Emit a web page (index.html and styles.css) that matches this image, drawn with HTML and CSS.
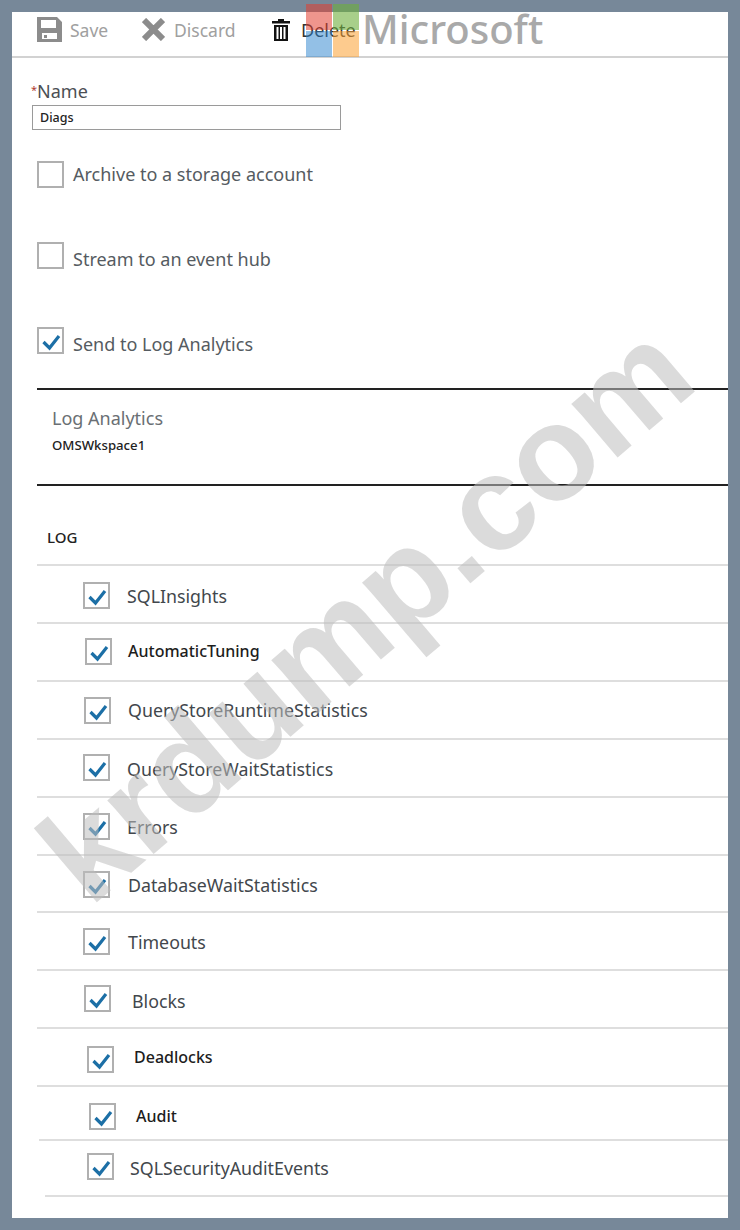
FILE: index.html
```html
<!DOCTYPE html>
<html lang="en">
<head>
    <meta charset="UTF-8">
    <meta name="viewport" content="width=device-width, initial-scale=1.0">
    <title>Diagnostics settings</title>
    <link rel="stylesheet" href="styles.css">
</head>
<body>
    <div class="panel">
        <header class="toolbar">
            <span class="tool tool-save">
                <svg width="25" height="25" viewBox="0 0 25 25"><path fill="#8c8c8c" fill-rule="evenodd" d="M0 0H20L25 5V25H0ZM4 3V11H19V3ZM5 16V22H20V16Z"/><rect x="7" y="18" width="3" height="3" fill="#8c8c8c"/></svg>
                Save
            </span>
            <span class="tool tool-discard">
                <svg width="23" height="23" viewBox="0 0 23 23"><path fill="none" stroke="#8c8c8c" stroke-width="6" d="M2 2L21 21M21 2L2 21"/></svg>
                Discard
            </span>
            <span class="tool tool-delete">
                <svg width="18" height="22" viewBox="0 0 18 22"><path fill="#111" fill-rule="evenodd" d="M6 0H12V2H18V4.500H0V2H6ZM2 6H16V22H2ZM4.500 8V20H6.500V8ZM8 8V20H10V8ZM11.500 8V20H13.500V8Z"/></svg>
                Delete
            </span>
        </header>

        <section class="name-field">
            <label class="field-label"><span class="required">*</span>Name</label>
            <div class="text-input">Diags</div>
        </section>

        <section class="targets">
            <div class="target target-archive"><span class="box"></span>Archive to a storage account</div>
            <div class="target target-stream"><span class="box"></span>Stream to an event hub</div>
            <div class="target target-send">
                <span class="box"><svg width="25" height="25" viewBox="0 0 25 25"><path class="tick" d="M4.500 13L10.500 19L20 7"/></svg></span>
                Send to Log Analytics
            </div>
        </section>

        <section class="workspace">
            <div class="workspace-title">Log Analytics</div>
            <div class="workspace-name">OMSWkspace1</div>
        </section>

        <div class="log-heading">LOG</div>

        <div class="log-list">
            <div class="row row-insights"><span class="box"><svg width="25" height="25" viewBox="0 0 25 25"><path class="tick" d="M4.500 13L10.500 19L20 7"/></svg></span>SQLInsights</div>
            <div class="row row-tuning dark"><span class="box"><svg width="25" height="25" viewBox="0 0 25 25"><path class="tick" d="M4.500 13L10.500 19L20 7"/></svg></span>AutomaticTuning</div>
            <div class="row row-runtime"><span class="box"><svg width="25" height="25" viewBox="0 0 25 25"><path class="tick" d="M4.500 13L10.500 19L20 7"/></svg></span>QueryStoreRuntimeStatistics</div>
            <div class="row row-wait"><span class="box"><svg width="25" height="25" viewBox="0 0 25 25"><path class="tick" d="M4.500 13L10.500 19L20 7"/></svg></span>QueryStoreWaitStatistics</div>
            <div class="row row-errors"><span class="box"><svg width="25" height="25" viewBox="0 0 25 25"><path class="tick" d="M4.500 13L10.500 19L20 7"/></svg></span>Errors</div>
            <div class="row row-dbwait"><span class="box"><svg width="25" height="25" viewBox="0 0 25 25"><path class="tick" d="M4.500 13L10.500 19L20 7"/></svg></span>DatabaseWaitStatistics</div>
            <div class="row row-timeouts"><span class="box"><svg width="25" height="25" viewBox="0 0 25 25"><path class="tick" d="M4.500 13L10.500 19L20 7"/></svg></span>Timeouts</div>
            <div class="row row-blocks"><span class="box"><svg width="25" height="25" viewBox="0 0 25 25"><path class="tick" d="M4.500 13L10.500 19L20 7"/></svg></span>Blocks</div>
            <div class="row row-deadlocks dark"><span class="box"><svg width="25" height="25" viewBox="0 0 25 25"><path class="tick" d="M4.500 13L10.500 19L20 7"/></svg></span>Deadlocks</div>
            <div class="row row-audit dark"><span class="box"><svg width="25" height="25" viewBox="0 0 25 25"><path class="tick" d="M4.500 13L10.500 19L20 7"/></svg></span>Audit</div>
            <div class="row row-security"><span class="box"><svg width="25" height="25" viewBox="0 0 25 25"><path class="tick" d="M4.500 13L10.500 19L20 7"/></svg></span>SQLSecurityAuditEvents</div>
        </div>

        <!-- overlays -->
        <div class="ms-logo">
            <div class="ms-squares">
                <span class="sq sq-red"></span>
                <span class="sq sq-green"></span>
                <span class="sq sq-blue"></span>
                <span class="sq sq-orange"></span>
            </div>
            <span class="ms-word">Microsoft</span>
        </div>
        <div class="watermark">krdump.com</div>
    </div>
</body>
</html>
```
FILE: styles.css
```css
:root {
    --frame-color: #778899;
    --text-color: #555b61;
    --dark-text: #1d1d1d;
    --line-color: #d2d2d2;
    --box-border: #b0b0b0;
}
html, body {
    margin: 0;
    padding: 0;
}
body {
    width: 740px;
    height: 1230px;
    overflow: hidden;
    background-color: var(--frame-color);
    font-family: "Noto Sans", "Open Sans", sans-serif;
    color: var(--text-color);
}
.panel {
    position: relative;
    box-sizing: border-box;
    width: 716px;
    height: 1206px;
    margin: 12px;
    background-color: #fff;
}

/* toolbar */
.toolbar {
    box-sizing: border-box;
    display: flex;
    align-items: center;
    height: 46px;
    padding: 0 0 9px 25px;
    border-bottom: 2px solid var(--line-color);
    font-size: 17.500px;
    color: #a0a0a0;
}
.tool {
    display: flex;
    align-items: center;
    gap: 8px;
}
.tool-save {
    width: 105px;
}
.tool-discard {
    width: 130px;
    gap: 9px;
}
.tool-delete {
    gap: 11px;
    font-size: 18px;
    color: #333;
}

/* name */
.name-field {
    padding: 20px 0 0 19px;
}
.field-label {
    display: block;
    font-size: 18px;
    line-height: 24px;
    color: #4b4f54;
}
.required {
    color: #b03a2e;
    font-size: 11px;
    vertical-align: 4px;
}
.text-input {
    box-sizing: border-box;
    width: 309px;
    height: 25px;
    margin: 2px 0 0 1px;
    padding-left: 7px;
    border: 1px solid #9a9a9a;
    font-size: 12.500px;
    line-height: 23px;
    font-weight: 500;
    color: #222;
}

/* checkboxes */
.box {
    box-sizing: border-box;
    display: block;
    flex: none;
    width: 27px;
    height: 27px;
    border: 2px solid var(--box-border);
    background-color: #fff;
}
.box svg {
    display: block;
}
.tick {
    fill: none;
    stroke: #1c6fa6;
    stroke-width: 3.200;
}
.targets {
    padding: 31px 0 0 25px;
}
.target {
    display: flex;
    align-items: flex-start;
    gap: 9px;
    height: 27px;
    margin-bottom: 58px;
    font-size: 18px;
    line-height: 27px;
}
.target-archive {
    margin-bottom: 54px;
}
.target-stream,
.target-send {
    line-height: 35px;
}
.target-send {
    margin-bottom: 34px;
}

/* workspace block */
.workspace {
    box-sizing: border-box;
    height: 98px;
    margin-left: 25px;
    padding: 15px 0 0 15px;
    border-top: 2px solid #222;
    border-bottom: 2px solid #222;
}
.workspace-title {
    font-size: 18px;
    line-height: 26px;
    color: #6a6f74;
}
.workspace-name {
    margin-top: 5px;
    font-size: 13.200px;
    line-height: 18px;
    font-weight: 500;
    color: #222;
}
.log-heading {
    height: 78px;
    margin-left: 35px;
    padding-top: 41px;
    box-sizing: border-box;
    font-size: 15px;
    line-height: 20px;
    font-weight: 500;
    color: #222;
}

/* log rows */
.log-list {
    margin-left: 25px;
    border-top: 2px solid #dedede;
}
.row {
    --box-x: 46px;
    --gap: 17px;
    --nudge: 0px;
    box-sizing: border-box;
    display: flex;
    align-items: center;
    gap: var(--gap);
    height: 58px;
    padding-left: var(--box-x);
    padding-top: var(--nudge);
    border-bottom: 2px solid #dedede;
    font-size: 17.800px;
    color: #42474c;
}
.row.dark {
    font-size: 16px;
    font-weight: 500;
    color: var(--dark-text);
}
.row-insights { --nudge: 3px; }
.row-tuning { --box-x: 48px; --gap: 16px; padding-bottom: 2px; }
.row-runtime { --box-x: 47px; }
.row-wait { --nudge: 2px; }
.row-wait .box { margin-bottom: 4px; }
.row-errors { --nudge: 2px; }
.row-errors .box { margin-bottom: 2px; }
.row-dbwait { --gap: 18px; --nudge: 2px; height: 57px; }
.row-timeouts { --gap: 18px; --nudge: 2px; }
.row-timeouts .box { margin-bottom: 2px; }
.row-blocks { --box-x: 47px; --gap: 21px; --nudge: 4px; }
.row-blocks .box { margin-bottom: 6px; }
.row-deadlocks { --box-x: 50px; --gap: 20px; }
.row-deadlocks .box { margin-top: 4px; }
.row-audit { --box-x: 50px; --gap: 20px; --nudge: 6px; height: 54px; margin-left: 2px; }
.row-security { --box-x: 42px; --gap: 16px; height: 56px; margin-left: 8px; }
.row-security .box { margin-bottom: 4px; }

/* logo stamped over the toolbar */
.ms-logo {
    position: absolute;
    top: -8px;
    left: 294px;
    display: flex;
    align-items: center;
    gap: 5px;
}
.ms-squares {
    display: grid;
    grid-template-columns: 26px 26px;
    grid-template-rows: 26px 26px;
    gap: 1px;
}
.sq-red { background-color: rgba(226, 62, 48, 0.55); }
.sq-green { background-color: rgba(110, 175, 60, 0.6); }
.sq-blue { background-color: rgba(40, 130, 205, 0.5); }
.sq-orange { background-color: rgba(252, 160, 50, 0.55); }
.ms-word {
    margin-top: -4px;
    margin-left: -2px;
    font-size: 40px;
    line-height: 50px;
    font-weight: 500;
    color: #a9a9a9;
}

.watermark {
    position: absolute;
    top: 564px;
    left: -36px;
    width: 700px;
    text-align: center;
    font-family: "Liberation Sans", sans-serif;
    font-size: 134px;
    line-height: 140px;
    font-weight: 700;
    white-space: nowrap;
    color: rgba(190, 190, 190, 0.55);
    transform: rotate(-40.500deg);
    pointer-events: none;
}
```
